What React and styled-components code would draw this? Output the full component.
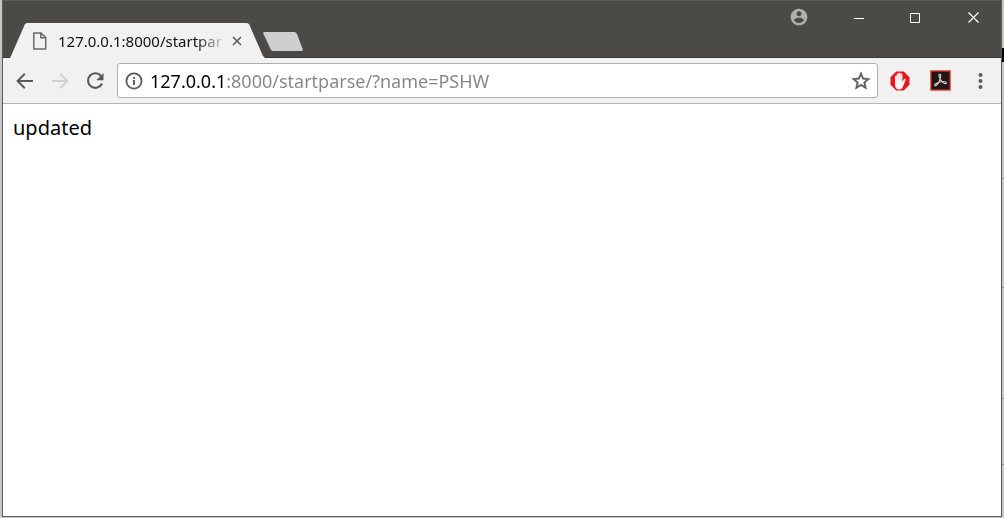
import React, { useState } from "react";
import styled, { createGlobalStyle } from "styled-components";

const GlobalStyle = createGlobalStyle`
  * { box-sizing: border-box; }
  body {
    margin: 0;
    font-family: "Noto Sans", "Open Sans", sans-serif;
  }
  button {
    margin: 0;
    padding: 0;
    border: 0;
    background: none;
    color: inherit;
    font: inherit;
  }
  svg { display: block; }
`;

const Desktop = styled.div`
  display: flex;
  min-height: 100vh;
  padding: 0 2px 1px;
  background:
    linear-gradient(#000, #000) right 48px / 2px 14px no-repeat,
    linear-gradient(#999, #999) right 178px / 2px 1px no-repeat,
    linear-gradient(#999, #999) right 287px / 2px 1px no-repeat,
    linear-gradient(#999, #999) right 398px / 2px 1px no-repeat,
    linear-gradient(#999, #999) right 464px / 2px 1px no-repeat,
    #c6c6c6;
`;

const BrowserWindow = styled.div`
  display: flex;
  flex: 1;
  flex-direction: column;
  min-width: 0;
  border: 1px solid #5b5b5a;
  background: #fff;
`;

const TitleBar = styled.header`
  display: flex;
  justify-content: space-between;
  height: 57px;
  padding-left: 7px;
  background: linear-gradient(#4b4a47 56px, #3b3936 56px);
`;

const TabStrip = styled.div`
  display: flex;
  align-items: flex-end;
`;

const Tab = styled.div`
  display: flex;
  align-items: center;
  width: 255px;
  height: 35px;
  padding: 0 18px 0 22px;
  background: #f1f1f1;
  clip-path: polygon(0 100%, 1px 33px, 15px 1px, 17px 0, 237px 0, 239px 1px, 253px 33px, 100% 100%);
`;

const TabTitle = styled.span`
  flex: 1;
  min-width: 0;
  margin: 0 2px 0 11px;
  white-space: nowrap;
  font-size: 15px;
  line-height: 20px;
  color: transparent;
  background: linear-gradient(to right, #111 138px, rgba(17, 17, 17, 0.15) 164px);
  background-clip: text;
`;

const TabClose = styled.button`
  display: grid;
  place-items: center;
  width: 20px;
  height: 20px;
  color: #5a5a5a;
`;

const NewTab = styled.button`
  width: 40px;
  height: 19px;
  margin: 0 0 7px -2px;
  background: #cfcfcf;
  clip-path: polygon(0 1px, 1px 0, 32px 0, 34px 2px, 100% 18px, 39px 100%, 10px 100%, 8px 18px);
`;

const WindowControls = styled.div`
  display: flex;
`;

const ControlButton = styled.button`
  display: grid;
  place-items: center;
  width: ${(p) => (p.$wide ? 62 : 57)}px;
  height: 32px;
  color: ${(p) => (p.$wide ? "#b1b0af" : "#fff")};
`;

const Toolbar = styled.div`
  display: flex;
  align-items: center;
  height: 46px;
  padding: 0 1px 0 4px;
  border-bottom: 1px solid #b4b4b4;
  background: #f1f1f1;
`;

const ToolButton = styled.button`
  display: grid;
  place-items: center;
  flex: none;
  width: ${(p) => (p.$extension ? 40 : 35)}px;
  height: 34px;
  color: ${(p) => (p.disabled ? "#d2d2d2" : "#5a5a5a")};
`;

const Omnibox = styled.div`
  display: flex;
  align-items: center;
  flex: 1;
  min-width: 0;
  height: 35px;
  margin: 0 2px 0 5px;
  border: 1px solid #aeaeae;
  border-radius: 3px;
  background: #fff;
`;

const OmniboxButton = styled.button`
  display: grid;
  place-items: center;
  flex: none;
  width: 32px;
  height: 32px;
  color: #5a5a5a;
`;

const Address = styled.input`
  flex: 1;
  min-width: 0;
  height: 28px;
  padding: 0;
  border: 0;
  outline: 0;
  font: 18px/24px "Noto Sans", "Open Sans", sans-serif;
  color: transparent;
  caret-color: #000;
  background: linear-gradient(to right, #000 76px, #858585 76px);
  background-clip: text;
`;

const Page = styled.main`
  flex: 1;
  padding: 10px;
  font-size: 20px;
  line-height: 28px;
  color: #000;
`;

const FileIcon = () => (
  <svg width="15" height="18" viewBox="0 0 15 18" fill="none" stroke="#6a6a6a" strokeWidth="1.5">
    <path d="M1.8 .9h7L13.700 5.500v11.600H1.800z" strokeLinejoin="round" />
    <path d="M8.800 1v4.700h4.700" />
  </svg>
);

const SmallCross = () => (
  <svg width="10" height="10" viewBox="0 0 10 10" stroke="currentColor" strokeWidth="1.600">
    <path d="M1 1l8 8M9 1L1 9" />
  </svg>
);

const ProfileIcon = () => (
  <svg width="20" height="20" viewBox="0 0 24 24" fill="currentColor">
    <path d="M12 2C6.480 2 2 6.480 2 12s4.480 10 10 10 10-4.480 10-10S17.520 2 12 2zm0 3c1.660 0 3 1.340 3 3s-1.340 3-3 3-3-1.340-3-3 1.340-3 3-3zm0 14.200c-2.500 0-4.710-1.280-6-3.220.03-1.990 4-3.080 6-3.080s5.970 1.090 6 3.080c-1.290 1.940-3.500 3.220-6 3.220z" />
  </svg>
);

const MinimizeIcon = () => (
  <svg width="11" height="11" viewBox="0 0 11 11" stroke="currentColor">
    <path d="M1 6.500h10" />
  </svg>
);

const MaximizeIcon = () => (
  <svg width="11" height="11" viewBox="0 0 11 11" fill="none" stroke="currentColor">
    <path d="M.5 1.500h9v9h-9z" />
  </svg>
);

const CloseIcon = () => (
  <svg width="12" height="12" viewBox="0 0 12 12" stroke="currentColor" strokeWidth="1.200">
    <path d="M1.500 1.500l10 10M11.500 1.500l-10 10" />
  </svg>
);

const ArrowIcon = ({ forward }) => (
  <svg width="18" height="18" viewBox="0 0 18 18" fill="none" stroke="currentColor" strokeWidth="2">
    <path d={forward ? "M1 9h15M9.200 1.800L16.400 9l-7.200 7.200" : "M17 9H2M8.800 1.800L1.600 9l7.200 7.200"} />
  </svg>
);

const ReloadIcon = () => (
  <svg width="24" height="24" viewBox="0 0 24 24" fill="none">
    <path d="M18 7A7.300 7.300 0 1 0 19 14.500" stroke="currentColor" strokeWidth="2.100" />
    <path d="M20.500 4v7.300h-7.300z" fill="currentColor" />
  </svg>
);

const InfoIcon = () => (
  <svg width="18" height="18" viewBox="0 0 18 18" fill="none" stroke="currentColor">
    <circle cx="9" cy="9" r="7.600" strokeWidth="1.800" />
    <path d="M9 8v5M9 5v1.800" strokeWidth="1.900" />
  </svg>
);

const StarIcon = () => (
  <svg width="22" height="22" viewBox="0 0 24 24" fill="currentColor" stroke="currentColor" strokeWidth=".5">
    <path d="M22 9.240l-7.190-.62L12 2 9.190 8.630 2 9.240l5.460 4.730L5.820 21 12 17.270 18.180 21l-1.630-7.030L22 9.240zM12 15.400l-3.760 2.270 1-4.280-3.320-2.880 4.380-.38L12 6.100l1.710 4.040 4.380.38-3.320 2.880 1 4.280L12 15.400z" />
  </svg>
);

const BlockerIcon = () => (
  <svg width="20" height="20" viewBox="0 0 20 20">
    <path d="M6.200.5h7.600l5.700 5.700v7.600l-5.700 5.700H6.200L.5 13.800V6.200z" fill="#e8151b" />
    <path d="M5 5.500c0-1.100 1.600-1.100 1.700 0V3.400c0-1.200 1.800-1.200 1.800 0v-.8c0-1.300 2-1.300 2 0v.7c0-1.200 1.900-1.200 1.900 0v7.400l1.500-2.400c.7-1 2-.4 1.700.7l-2.200 5.600c-.6 2-1.700 3.900-3.300 3.900H9c-2.500 0-4-2-4-5z" fill="#f7f3f1" />
    <path d="M6.800 5v4.500M8.600 3.500v5.500M10.500 3.500V9" stroke="#cfa8a6" strokeWidth=".4" />
  </svg>
);

const AcrobatIcon = () => (
  <svg width="21" height="21" viewBox="0 0 21 21">
    <path d="M.8.8h19.400v19.400H.8z" fill="#231416" stroke="#f04a36" strokeWidth="1.300" />
    <path
      d="M9.400 4.200c1.300-.4 1.600 1.900.9 4.200-.8 2.700-2.700 6.200-4.300 7.200-1.200.7-2-.5-.7-1.600 1.800-1.500 4.800-2.400 7.600-2.500 2.500-.1 3.800.7 3.500 1.600-.5 1.300-2.900.3-4.600-1.600C9.700 9.300 8.200 4.600 9.400 4.200z"
      fill="none"
      stroke="#cfc4c4"
      strokeWidth="1.200"
    />
  </svg>
);

const MenuIcon = () => (
  <svg width="5" height="18" viewBox="0 0 5 18" fill="currentColor">
    <circle cx="2.500" cy="3" r="2" />
    <circle cx="2.500" cy="9" r="2" />
    <circle cx="2.500" cy="15" r="2" />
  </svg>
);

export default function App() {
  const [url, setUrl] = useState("127.0.0.1:8000/startparse/?name=PSHW");
  return (
    <Desktop>
      <GlobalStyle />
      <BrowserWindow>
        <TitleBar>
          <TabStrip>
            <Tab>
              <FileIcon />
              <TabTitle>127.0.0.1:8000/startpar</TabTitle>
              <TabClose aria-label="Close tab"><SmallCross /></TabClose>
            </Tab>
            <NewTab aria-label="New tab" />
          </TabStrip>
          <WindowControls>
            <ControlButton $wide aria-label="Profile"><ProfileIcon /></ControlButton>
            <ControlButton aria-label="Minimize"><MinimizeIcon /></ControlButton>
            <ControlButton aria-label="Maximize"><MaximizeIcon /></ControlButton>
            <ControlButton aria-label="Close"><CloseIcon /></ControlButton>
          </WindowControls>
        </TitleBar>
        <Toolbar>
          <ToolButton aria-label="Back"><ArrowIcon /></ToolButton>
          <ToolButton aria-label="Forward" disabled><ArrowIcon forward /></ToolButton>
          <ToolButton aria-label="Reload"><ReloadIcon /></ToolButton>
          <Omnibox>
            <OmniboxButton aria-label="Site information"><InfoIcon /></OmniboxButton>
            <Address
              type="text"
              aria-label="Address"
              spellCheck={false}
              value={url}
              onChange={(e) => setUrl(e.target.value)}
            />
            <OmniboxButton aria-label="Bookmark this page"><StarIcon /></OmniboxButton>
          </Omnibox>
          <ToolButton $extension aria-label="Ad blocker"><BlockerIcon /></ToolButton>
          <ToolButton $extension aria-label="Acrobat"><AcrobatIcon /></ToolButton>
          <ToolButton $extension aria-label="Menu"><MenuIcon /></ToolButton>
        </Toolbar>
        <Page>updated</Page>
      </BrowserWindow>
    </Desktop>
  );
}
